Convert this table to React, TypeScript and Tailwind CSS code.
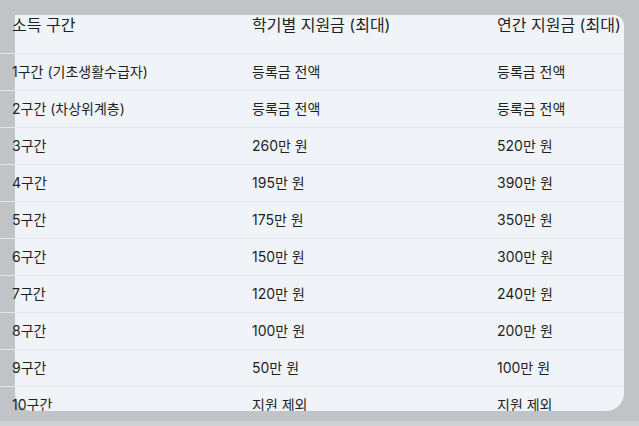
import React from "react";

const rows: [string, string, string][] = [
  ["1구간 (기초생활수급자)", "등록금 전액", "등록금 전액"],
  ["2구간 (차상위계층)", "등록금 전액", "등록금 전액"],
  ["3구간", "260만 원", "520만 원"],
  ["4구간", "195만 원", "390만 원"],
  ["5구간", "175만 원", "350만 원"],
  ["6구간", "150만 원", "300만 원"],
  ["7구간", "120만 원", "240만 원"],
  ["8구간", "100만 원", "200만 원"],
  ["9구간", "50만 원", "100만 원"],
  ["10구간", "지원 제외", "지원 제외"],
];

export default function App() {
  return (
    <div
      className="w-[639px] h-[426px] bg-[#c1c4c7] flex flex-col overflow-hidden text-[#1f1f1f]"
      style={{ fontFamily: '"Inter", "Noto Sans CJK KR", sans-serif' }}
    >
      <div className="relative w-[624px] h-[411px] overflow-hidden shrink-0">
        <div className="absolute left-[15px] top-[15px] right-0 bottom-0 bg-[#f0f4f9] rounded-tr-[10px] rounded-b-[18px]" />
        <div className="relative flex flex-col">
          <div className="grid grid-cols-[252px_245px_1fr] h-[54px] pt-[13px] border-b border-[#e2e6eb] text-[16px] leading-[24px]">
            <div className="pl-[12px]">소득 구간</div>
            <div>학기별 지원금 (최대)</div>
            <div>연간 지원금 (최대)</div>
          </div>
          {rows.map((r, i) => (
            <div
              key={i}
              className="grid grid-cols-[252px_245px_1fr] h-[37px] items-center border-b border-[#e2e6eb] text-[14px] leading-[20px]"
            >
              <div className="pl-[12px]">{r[0]}</div>
              <div>{r[1]}</div>
              <div>{r[2]}</div>
            </div>
          ))}
        </div>
      </div>
      <div className="h-[10px] shrink-0" />
      <div className="h-[5px] bg-[#cfd0d2] shrink-0" />
    </div>
  );
}
